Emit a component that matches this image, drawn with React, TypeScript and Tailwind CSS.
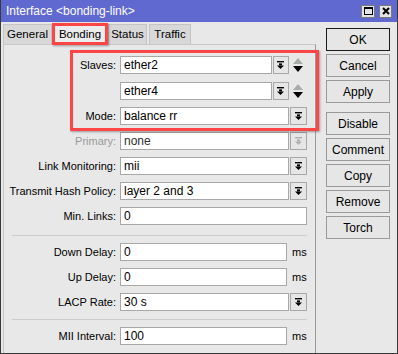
const font = 'font-["Liberation_Sans",Arial,sans-serif]';

function DropIcon({ disabled = false }: { disabled?: boolean }) {
  const c = disabled ? '#b0b0b0' : '#000';
  return (
    <svg width="8" height="9" viewBox="0 0 8 9">
      <rect x="0" y="0" width="7" height="1.4" fill={c} />
      <rect x="2" y="2.4" width="3" height="2" fill={c} />
      <polygon points="0,4.4 7,4.4 3.5,8" fill={c} />
    </svg>
  );
}

function DropButton({ disabled = false, w = 'w-[17px]' }: { disabled?: boolean; w?: string }) {
  return (
    <div className={`${w} h-[18px] ml-px flex items-center justify-center border border-[#a8a8a8] bg-[#e6e6e6]`}>
      <DropIcon disabled={disabled} />
    </div>
  );
}

function UpDown() {
  return (
    <svg width="10" height="14" viewBox="0 0 10 14" className="ml-[4px]">
      <polygon points="5,0 10,6 0,6" fill="#a6ada6" />
      <polygon points="0,8 10,8 5,14" fill="#000" />
    </svg>
  );
}

function Field({ value, w, muted = false }: { value: string; w: string; muted?: boolean }) {
  return (
    <div
      className={`${w} h-[18px] flex items-center px-[3px] border border-[#a8a8a8] bg-white text-[12px] ${
        muted ? 'text-[#303030]' : 'text-black'
      }`}
    >
      {value}
    </div>
  );
}

function Row({
  label,
  muted = false,
  children,
}: {
  label: string;
  muted?: boolean;
  children: React.ReactNode;
}) {
  return (
    <div className="flex items-center h-[18px]">
      <div className={`w-[112px] text-right text-[11px] ${muted ? 'text-[#9a9a9a]' : 'text-black'}`}>{label}</div>
      <div className="ml-[4px] flex items-center">{children}</div>
    </div>
  );
}

function Ms() {
  return <span className="ml-[5px] text-[11px] text-black">ms</span>;
}

function Btn({ label, primary = false, extra = '' }: { label: string; primary?: boolean; extra?: string }) {
  return (
    <div
      className={`w-[64px] h-[23px] flex items-center justify-center bg-[#e6e6e6] text-[12px] text-black border ${
        primary ? 'border-[#1a1a1a]' : 'border-[#9a9a9a]'
      } ${extra}`}
    >
      {label}
    </div>
  );
}

const tabs = [
  { name: 'General', cls: 'w-[49px] bg-[#d8d8d8]' },
  { name: 'Bonding', cls: 'w-[54px] bg-[#ececec]' },
  { name: 'Status', cls: 'w-[39px] bg-[#d8d8d8]' },
  { name: 'Traffic', cls: 'w-[42px] ml-[1px] bg-[#d8d8d8]' },
];

export default function App() {
  return (
    <div className={`relative w-[398px] h-[354px] flex flex-col bg-[#e8e8e8] border-x border-b border-[#3a3a3a] ${font}`}>
      {/* title bar */}
      <div className="h-[22px] flex items-center bg-[#5f69cf] pl-[5px] pr-[5px]">
        <span className="text-[12px] text-white">Interface &lt;bonding-link&gt;</span>
        <div className="ml-auto flex items-center gap-[4px]">
          <div className="w-[14px] h-[13px] flex items-center justify-center bg-[#e4e4e4] border border-[#7a7a7a]">
            <div className="w-[9px] h-[8px] border border-black border-t-2" />
          </div>
          <div className="w-[13px] h-[13px] flex items-center justify-center bg-[#e4e4e4] border border-[#7a7a7a]">
            <svg width="8" height="8" viewBox="0 0 8 8">
              <path d="M1 1 L7 7 M7 1 L1 7" stroke="#000" strokeWidth="2" />
            </svg>
          </div>
        </div>
      </div>

      <div className="flex flex-1">
        {/* left side: tabs and panel */}
        <div className="ml-[2px] w-[313px] flex flex-col">
          <div className="mt-[2px] h-[20px] flex items-end gap-px">
            {tabs.map((t) => (
              <div
                key={t.name}
                className={`h-[20px] flex items-center justify-center text-[11.5px] text-black border border-b-0 border-[#c4c4c4] ${t.cls}`}
              >
                {t.name}
              </div>
            ))}
          </div>

          <div className="flex-1 flex flex-col border-l border-r border-t border-[#c8c8c8] border-r-[#9a9a9a] bg-[#e8e8e8] pt-[11px]">
            <Row label="Slaves:">
              <Field value="ether2" w="w-[152px]" />
              <DropButton w="w-[16px]" />
              <UpDown />
            </Row>
            <div className="mt-[8px]">
              <Row label="">
                <Field value="ether4" w="w-[152px]" />
                <DropButton w="w-[16px]" />
                <UpDown />
              </Row>
            </div>
            <div className="mt-[7px] flex flex-col gap-[7px]">
              <Row label="Mode:">
                <Field value="balance rr" w="w-[169px]" />
                <DropButton />
              </Row>
              <Row label="Primary:" muted>
                <Field value="none" w="w-[169px]" muted />
                <DropButton disabled />
              </Row>
              <Row label="Link Monitoring:">
                <Field value="mii" w="w-[169px]" />
                <DropButton />
              </Row>
              <Row label="Transmit Hash Policy:">
                <Field value="layer 2 and 3" w="w-[169px]" />
                <DropButton />
              </Row>
              <Row label="Min. Links:">
                <Field value="0" w="w-[187px]" />
              </Row>
            </div>

            <div className="mt-[10px] ml-[8px] w-[295px] h-px bg-[#cdcdcd]" />

            <div className="mt-[7px] flex flex-col gap-[7px]">
              <Row label="Down Delay:">
                <Field value="0" w="w-[167px]" />
                <Ms />
              </Row>
              <Row label="Up Delay:">
                <Field value="0" w="w-[167px]" />
                <Ms />
              </Row>
              <Row label="LACP Rate:">
                <Field value="30 s" w="w-[169px]" />
                <DropButton />
              </Row>
            </div>

            <div className="mt-[8px] ml-[8px] w-[295px] h-px bg-[#cdcdcd]" />

            <div className="mt-[7px]">
              <Row label="MII Interval:">
                <Field value="100" w="w-[167px]" />
                <Ms />
              </Row>
            </div>
          </div>
        </div>

        {/* right side: buttons */}
        <div className="ml-[10px] pt-[6px] flex flex-col gap-[3px]">
          <Btn label="OK" primary />
          <Btn label="Cancel" />
          <Btn label="Apply" />
          <Btn label="Disable" extra="mt-[6px]" />
          <Btn label="Comment" />
          <Btn label="Copy" />
          <Btn label="Remove" />
          <Btn label="Torch" />
        </div>
      </div>

      {/* red annotation boxes */}
      <div className="absolute left-[51px] top-[23px] w-[56px] h-[22px] border-[3px] border-[#ff4646] shadow-[1px_1px_2px_rgba(0,0,0,0.35)]" />
      <div className="absolute left-[69px] top-[50px] w-[249px] h-[81px] border-[3px] border-[#ff4646] shadow-[1px_1px_2px_rgba(0,0,0,0.35)]" />
    </div>
  );
}
